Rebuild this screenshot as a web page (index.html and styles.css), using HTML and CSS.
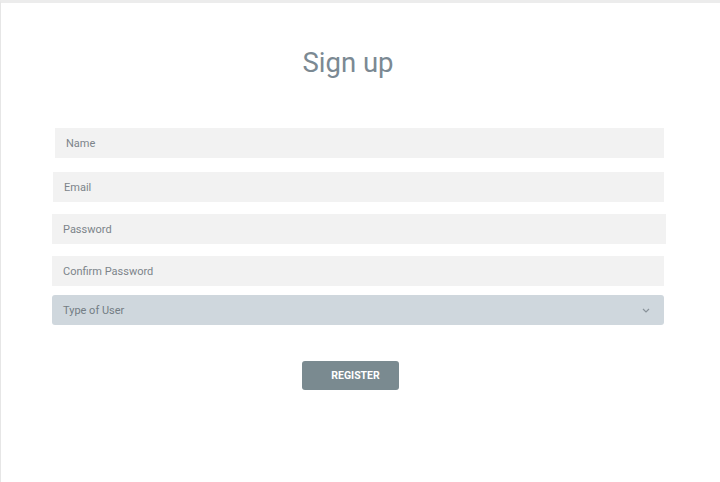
FILE: index.html
```html
<!DOCTYPE html>
<html lang="en">
<head>
<meta charset="utf-8">
<title>Sign up</title>
<link rel="stylesheet" href="styles.css">
</head>
<body>
<div class="page">
  <h1 class="title">Sign up</h1>
  <form class="form">
    <input class="field field-name" type="text" placeholder="Name">
    <input class="field field-email" type="email" placeholder="Email">
    <input class="field field-pass" type="password" placeholder="Password">
    <input class="field field-confirm" type="password" placeholder="Confirm Password">
    <div class="select">
      <span class="select-label">Type of User</span>
      <svg class="chev" width="8" height="5" viewBox="0 0 8 5"><path d="M1 1 L4 4 L7 1" fill="none" stroke="#8a939a" stroke-width="1.2"/></svg>
    </div>
    <button class="btn" type="button">REGISTER</button>
  </form>
</div>
</body>
</html>
```
FILE: styles.css
```css
html, body {
  margin: 0;
  padding: 0;
  background: #ffffff;
}
body {
  font-family: Roboto, "Liberation Sans", sans-serif;
  height: 482px;
  overflow: hidden;
}
.page {
  box-sizing: border-box;
  height: 482px;
  border-top: 3px solid #ececec;
  border-left: 1px solid #e6e6e6;
  display: flex;
  flex-direction: column;
}
.title {
  margin: 44px 0 0 0;
  font-weight: 400;
  font-size: 27.5px;
  line-height: 32px;
  color: #7b8993;
  text-align: center;
  padding-right: 25px;
}
.form {
  display: flex;
  flex-direction: column;
  margin-top: 49px;
}
.field {
  box-sizing: border-box;
  height: 30px;
  border: none;
  outline: none;
  background: #f2f2f2;
  font-family: Roboto, "Liberation Sans", sans-serif;
  font-size: 11px;
  color: #6f777d;
  padding: 0 11px;
}
.field::placeholder {
  color: #7c848a;
}
.field-name {
  margin-left: 54px;
  width: 609px;
}
.field-email {
  margin-left: 52px;
  width: 611px;
  margin-top: 14px;
}
.field-pass {
  margin-left: 51px;
  width: 614px;
  margin-top: 12px;
}
.field-confirm {
  margin-left: 51px;
  width: 612px;
  margin-top: 12px;
}
.select {
  box-sizing: border-box;
  margin-left: 51px;
  width: 612px;
  height: 30px;
  margin-top: 9px;
  background: #cfd7dd;
  border-radius: 3px;
  display: flex;
  align-items: center;
  justify-content: space-between;
  padding: 0 14px 0 11px;
  font-size: 11px;
  color: #737d84;
}
.chev {
  display: block;
}
.btn {
  align-self: flex-start;
  margin-left: 301px;
  margin-top: 36px;
  width: 97px;
  height: 29px;
  border: none;
  border-radius: 3px;
  background: #7a8a90;
  color: #ffffff;
  font-family: Roboto, "Liberation Sans", sans-serif;
  font-weight: 700;
  font-size: 10.5px;
  padding: 0 0 0 10px;
}
```
